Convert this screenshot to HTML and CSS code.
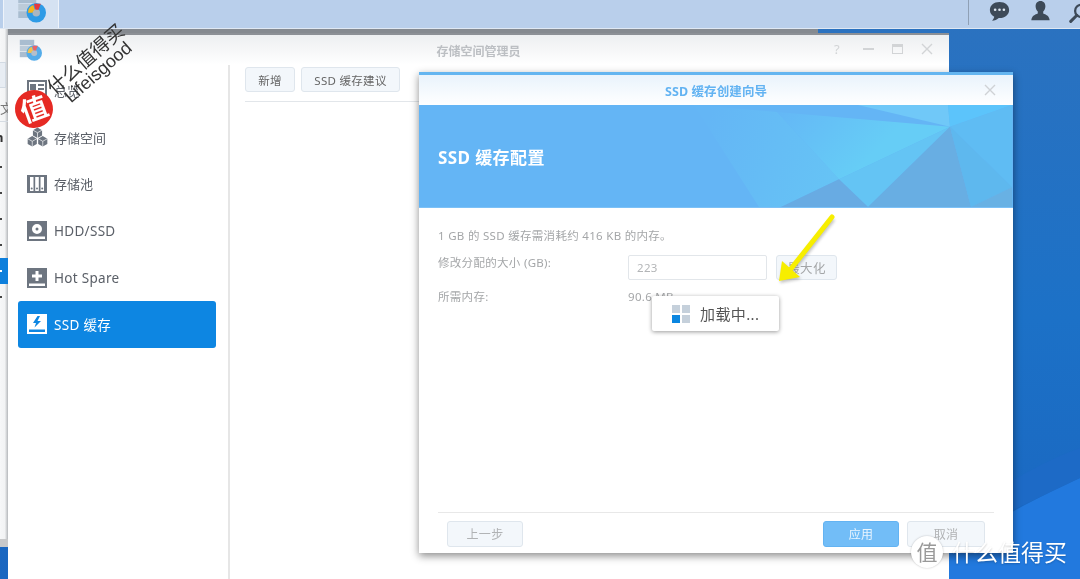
FILE: index.html
```html
<!DOCTYPE html>
<html lang="zh-CN">
<head>
<meta charset="utf-8">
<title>存储空间管理员</title>
<link rel="stylesheet" href="styles.css">
</head>
<body>
<div class="stage">
  <svg class="wallpaper" viewBox="0 0 1080 579" preserveAspectRatio="none">
    <defs>
      <linearGradient id="wall" x1="0" y1="0" x2="0" y2="1">
        <stop offset="0" stop-color="#2c72bf"/>
        <stop offset=".55" stop-color="#1c71c7"/>
        <stop offset="1" stop-color="#1a66c0"/>
      </linearGradient>
    </defs>
    <rect width="1080" height="579" fill="url(#wall)"/>
    <path d="M900 579 C960 540 1030 500 1080 478 V579 Z" fill="#2279de"/>
    <path d="M1013 480 C1040 465 1060 455 1080 448 V478 L1013 510 Z" fill="#1d6ac6"/>
  </svg>

  <header class="taskbar">
    <div class="task-tab">
      <svg class="app-icon" viewBox="0 0 40 40">
        <rect x="3" y="3" width="24" height="9" fill="#a9bdd0"/>
        <rect x="3" y="13" width="24" height="9" fill="#bccbd9"/>
        <rect x="3" y="23" width="24" height="9" fill="#a9bdd0"/>
        <circle cx="27" cy="25" r="9" fill="#aab6c2"/>
        <circle cx="27" cy="25" r="9" fill="none" stroke="#2e9be6" stroke-width="8"/>
        <path d="M16 25 A11 11 0 0 1 23 14.500 L25 21 A5 5 0 0 0 22 25 Z" fill="#f5b51c"/>
        <path d="M24 13 H33 L30 21 H26 Z" fill="#e8383d"/>
      </svg>
    </div>
    <div class="task-right">
      <svg class="tray-icon" viewBox="0 0 24 24"><path d="M12 1C5.600 1 1 5 1 10.200c0 3.400 2 6.200 5 7.800-.3 1.600-1.200 3.200-2.500 4.500 3 0 5.800-1.200 7.700-3h.8c6.400 0 11-4 11-9.300C23 5 18.400 1 12 1Z" fill="#3d4a58"/><circle cx="7" cy="10" r="1.500" fill="#dfe8f2"/><circle cx="12" cy="10" r="1.500" fill="#dfe8f2"/><circle cx="17" cy="10" r="1.500" fill="#dfe8f2"/></svg>
      <svg class="tray-icon" viewBox="0 0 24 24"><path d="M12 0c-3.600 0-5.600 2.600-5.600 6 0 2.500 1 4.700 2.500 6v2.200C6 15.500 2 16.500 1.500 22h21c-.5-5.500-4.500-6.500-7.400-7.800V12c1.500-1.300 2.500-3.500 2.500-6 0-3.400-2-6-5.600-6Z" fill="#3d4a58"/></svg>
      <svg class="tray-icon tray-search" viewBox="0 0 24 24"><circle cx="14" cy="9" r="7" fill="none" stroke="#3d4a58" stroke-width="2.600"/><path d="M9 14 2 21" stroke="#3d4a58" stroke-width="3.400" stroke-linecap="round"/></svg>
    </div>
  </header>

  <aside class="back-window">
    <div class="back-head"></div>
    <div class="back-btn"></div>
    <div class="back-label">文件</div>
    <div class="back-name">n</div>
    <ul class="back-list">
      <li class="back-row"></li>
      <li class="back-row"></li>
      <li class="back-row"></li>
      <li class="back-row"></li>
      <li class="back-row is-on"></li>
      <li class="back-row"></li>
    </ul>
    <div class="back-foot"></div>
  </aside>

  <div class="back-band"></div>

  <section class="main-window">
    <div class="win-title">
      <svg class="title-icon" viewBox="0 0 40 40">
        <rect x="3" y="3" width="24" height="9" fill="#a9bdd0"/>
        <rect x="3" y="13" width="24" height="9" fill="#bccbd9"/>
        <rect x="3" y="23" width="24" height="9" fill="#a9bdd0"/>
        <circle cx="27" cy="25" r="9" fill="#b4bfca"/>
        <circle cx="27" cy="25" r="9" fill="none" stroke="#54ace9" stroke-width="8"/>
        <path d="M16 25 A11 11 0 0 1 23 14.500 L25 21 A5 5 0 0 0 22 25 Z" fill="#f3c04e"/>
        <path d="M24 13 H33 L30 21 H26 Z" fill="#ea6468"/>
      </svg>
      <span class="win-name">存储空间管理员</span>
      <div class="win-controls">
        <span class="ctl-help">?</span>
        <i class="ctl-min"></i>
        <i class="ctl-max"></i>
        <svg class="ctl-close" viewBox="0 0 12 12"><path d="M1 1 11 11M11 1 1 11" stroke="#d2d4d6" stroke-width="1.400"/></svg>
      </div>
    </div>
    <div class="win-body">
      <nav class="sidebar">
        <a class="nav-item">
          <svg class="nav-icon" viewBox="0 0 20 20"><path fill="#6d7580" fill-rule="evenodd" d="M0 0h20v20H0Zm2 2v16h16V2Zm1 2h6v6H3Zm8 0h6v2h-6Zm0 4h6v2h-6ZM3 13h14v2H3Z"/></svg>
          <span class="nav-cn">总览</span>
        </a>
        <a class="nav-item">
          <svg class="nav-icon nav-icon-wide" viewBox="0 0 22 20">
            <path fill="#6d7580" d="M11 0l4.800 2.800v5.500L11 11 6.200 8.300V2.800ZM5.500 9l4.800 2.800v5.500L5.500 20 .7 17.300v-5.500ZM16.500 9l4.800 2.800v5.500L16.500 20l-4.800-2.700v-5.500Z"/>
            <path fill="none" stroke="#fff" stroke-width=".7" d="M6.200 2.800 11 5.500l4.800-2.700M11 5.500V11M.7 11.800l4.800 2.700 4.800-2.700M5.500 14.500V20M11.700 11.800l4.800 2.700 4.800-2.700M16.500 14.500V20"/>
          </svg>
          <span class="nav-cn">存储空间</span>
        </a>
        <a class="nav-item">
          <svg class="nav-icon" viewBox="0 0 20 20"><path fill="#6d7580" fill-rule="evenodd" d="M0 1h20v18H0Zm3 2v14h3.500V3Zm5.200 0v14h3.600V3Zm5.300 0v14H17V3Z"/><circle cx="4.700" cy="14.500" r="1" fill="#6d7580"/><circle cx="10" cy="14.500" r="1" fill="#6d7580"/><circle cx="15.200" cy="14.500" r="1" fill="#6d7580"/></svg>
          <span class="nav-cn">存储池</span>
        </a>
        <a class="nav-item">
          <svg class="nav-icon" viewBox="0 0 20 20"><path fill="#6d7580" fill-rule="evenodd" d="M0 0h20v20H0Zm10 3a5 5 0 1 0 0 10 5 5 0 0 0 0-10Zm0 3.500a1.500 1.500 0 1 1 0 3 1.500 1.500 0 0 1 0-3ZM2 15.500V18h16v-2.500Z"/></svg>
          <span>HDD/SSD</span>
        </a>
        <a class="nav-item">
          <svg class="nav-icon" viewBox="0 0 20 20"><path fill="#6d7580" fill-rule="evenodd" d="M0 0h20v20H0Zm8.500 3v3.500H5v3h3.500V13h3V9.500H15v-3h-3.500V3ZM2 15.500V18h16v-2.500Z"/></svg>
          <span>Hot Spare</span>
        </a>
        <a class="nav-item is-active">
          <svg class="nav-icon" viewBox="0 0 20 20"><path fill="#fff" fill-rule="evenodd" d="M0 0h20v20H0Zm10.500 2L6 9h3l-1.500 4.500L14 7h-3.500L13 2ZM2 15.500V18h16v-2.500Z"/></svg>
          <span>SSD 缓存</span>
        </a>
      </nav>
      <div class="content">
        <div class="toolbar">
          <button class="btn btn-add">新增</button>
          <button class="btn btn-advice">SSD 缓存建议</button>
        </div>
      </div>
    </div>
  </section>

  <section class="dialog">
    <div class="dlg-title">
      <span>SSD 缓存创建向导</span>
      <svg class="dlg-close" viewBox="0 0 12 12"><path d="M1 1 11 11M11 1 1 11" stroke="#cfd2d5" stroke-width="1.400"/></svg>
    </div>
    <div class="banner">
      <svg class="banner-art" viewBox="0 0 594 103" preserveAspectRatio="none">
        <defs>
          <linearGradient id="sheen" x1="358" y1="7" x2="430" y2="75" gradientUnits="userSpaceOnUse">
            <stop offset="0" stop-color="#64b7f6"/>
            <stop offset="1" stop-color="#66cdf6"/>
          </linearGradient>
          <linearGradient id="sheen2" x1="280" y1="40" x2="420" y2="90" gradientUnits="userSpaceOnUse">
            <stop offset="0" stop-color="#64b6f5"/>
            <stop offset="1" stop-color="#66c4f5"/>
          </linearGradient>
        </defs>
        <polygon points="275,0 340,103 362,103 420,75 358,7" fill="url(#sheen2)"/>
        <polygon points="358,7 531,22 420,75" fill="url(#sheen)"/>
        <polygon points="439,0 529,0 531,22" fill="#70c8f8"/>
        <polygon points="529,0 593,0 531,22" fill="#5cc4fb"/>
        <polygon points="531,22 593,0 593,83" fill="#5fbcf3"/>
        <polygon points="420,75 531,22 449,103" fill="#64c4f4"/>
        <polygon points="362,103 420,75 449,103" fill="#68abe3"/>
        <polygon points="449,103 531,22 552,103" fill="#68aee3"/>
        <polygon points="531,22 593,83 552,103" fill="#5eb8ee"/>
        <polygon points="552,103 593,83 593,103" fill="#68b1e4"/>
      </svg>
      <h1 class="banner-title">SSD 缓存配置</h1>
    </div>
    <div class="dlg-body">
      <p class="note">1 GB 的 SSD 缓存需消耗约 416 KB 的内存。</p>
      <div class="form-row">
        <label class="form-label">修改分配的大小 (GB):</label>
        <div class="field">223</div>
        <button class="btn btn-max">最大化</button>
      </div>
      <div class="form-row form-row-mem">
        <label class="form-label">所需内存:</label>
        <span class="form-value">90.6 MB</span>
      </div>
    </div>
    <div class="dlg-foot">
      <button class="btn btn-foot">上一步</button>
      <div class="foot-right">
        <button class="btn btn-foot btn-apply">应用</button>
        <button class="btn btn-foot btn-cancel">取消</button>
      </div>
    </div>
  </section>

  <div class="loader">
    <span class="loader-grid"><i></i><i></i><i class="is-blue"></i><i></i></span>
    <span class="loader-text">加载中...</span>
  </div>

  <svg class="arrow" viewBox="0 0 1080 579">
    <defs><filter id="soft" x="-30%" y="-30%" width="160%" height="160%"><feGaussianBlur stdDeviation="1.500"/></filter></defs>
    <g filter="url(#soft)" opacity=".35" transform="translate(1 2)">
      <path d="M832 217 790 270" stroke="#555" stroke-width="5"/>
      <polygon points="779,281 782,261 800,277" fill="#555"/>
    </g>
    <path d="M832 217 790 270" stroke="#f7ee00" stroke-width="5" stroke-linecap="round"/>
    <polygon points="779,281 782,261 800,277" fill="#f7ee00"/>
  </svg>

  <div class="mark-top">
    <span class="mark-cn">什么值得买</span>
    <span class="mark-en">Lifeisgood</span>
    <span class="mark-seal">值</span>
  </div>

  <div class="mark-bottom">
    <span class="mark-disc">值</span>
    <span class="mark-word">什么值得买</span>
  </div>
</div>
</body>
</html>
```
FILE: styles.css
```css
* { box-sizing: border-box; }
html, body { margin: 0; padding: 0; width: 1080px; height: 579px; overflow: hidden; }
body { font-family: "Noto Sans", "Noto Sans CJK SC", sans-serif; color: #555; }
button { font: inherit; }
ul { list-style: none; margin: 0; padding: 0; }

.stage { position: relative; width: 1080px; height: 579px; overflow: hidden; filter: blur(.35px); }
.wallpaper { position: absolute; inset: 0; width: 100%; height: 100%; }

/* top bar */
.taskbar {
  position: absolute; left: 0; top: 0; width: 1080px; height: 29px;
  display: flex; justify-content: space-between; padding-left: 3px;
  background: #b9cfeb; border-bottom: 1px solid #dfe8f3;
}
.task-tab {
  width: 56px; height: 28px; background: #d5e2f2;
  border-left: 1px solid #eef3fa; border-right: 1px solid #eef3fa;
  display: flex; justify-content: center; align-items: flex-end; overflow: hidden;
}
.app-icon { width: 30px; height: 30px; flex: none; margin-bottom: 4px; }
.task-right {
  display: flex; align-items: flex-start; gap: 20px; width: 112px; height: 25px;
  border-left: 1px solid #8fa0b5; padding: 1px 0 0 20px; overflow: hidden; flex: none;
}
.tray-icon { width: 21px; height: 21px; flex: none; }
.tray-search { margin: 2px 0 0 -2px; }

/* windows behind, only slivers visible */
.back-window {
  position: absolute; left: 0; top: 29px; width: 8px; height: 518px; overflow: hidden;
  background: linear-gradient(90deg, #f6f7f8 0, #f2f3f4 60%, #b5b8bb 100%);
}
.back-head { height: 33px; }
.back-btn { height: 26px; width: 6px; background: #e8edf3; border: 1px solid #d2dae3; border-left: 0; }
.back-label { height: 34px; padding-top: 10px; font-size: 13px; line-height: 20px; color: #777; border-bottom: 1px solid #d5dbe2; white-space: nowrap; }
.back-name { height: 32px; font-size: 13px; font-weight: 700; line-height: 30px; text-indent: -5px; color: #333; }
.back-list { display: flex; flex-direction: column; }
.back-row { height: 26px; position: relative; }
.back-row::after { content: ""; position: absolute; left: 0; top: 12px; width: 2px; height: 2px; background: #444; }
.back-row.is-on { background: #0d7fdc; }
.back-row.is-on::after { background: #fff; }
.back-foot { position: absolute; left: 0; bottom: 0; width: 8px; height: 8px; background: #c8c9ca; }
.back-band { position: absolute; left: 8px; top: 29px; width: 810px; height: 4px; background: #858a90; }

/* storage manager window */
.main-window {
  position: absolute; left: 8px; top: 33px; width: 941px; height: 546px;
  display: flex; flex-direction: column; background: #fff;
  border-top: 2px solid #8c9096;
}
.win-title {
  height: 30px; flex: none; display: flex; align-items: center; justify-content: center;
  position: relative; padding-top: 2px; background: linear-gradient(#edeff1, #fff);
}
.title-icon { position: absolute; left: 10px; top: 3px; width: 24px; height: 24px; }
.win-name { font-size: 12px; font-weight: 700; color: #bcbfc3; }
.win-controls { position: absolute; right: 16px; top: 6px; display: flex; align-items: center; gap: 18px; height: 16px; }
.ctl-help { width: 11px; font-size: 13px; line-height: 16px; color: #d2d4d6; }
.ctl-min { width: 11px; height: 2px; background: #d2d4d6; }
.ctl-max { width: 11px; height: 10px; border: 1px solid #d2d4d6; border-top-width: 3px; }
.ctl-close { width: 12px; height: 12px; }
.win-body { flex: 1; display: flex; min-height: 0; }
.sidebar {
  width: 222px; flex: none; padding: 2px 12px 0 10px;
  border-right: 2px solid #e6e6e6; display: flex; flex-direction: column;
}
.nav-item {
  height: 46.8px; display: flex; align-items: center; gap: 7px; padding-left: 9px;
  font-size: 13.500px; color: #5b6068; letter-spacing: .3px; border-radius: 3px;
}
.nav-cn { font-size: 13px; letter-spacing: 0; }
.nav-icon { width: 20px; height: 20px; flex: none; }
.nav-icon-wide { width: 21px; margin-right: -1px; }
.is-active { background: #0d86e2; color: #fff; }
.content { flex: 1; padding: 2px 15px 0; }
.toolbar { display: flex; gap: 6px; width: 300px; height: 35px; border-bottom: 1px solid #e2e6ea; align-items: flex-start; }

.btn {
  height: 25px; padding: 0; font-size: 11.500px; color: #666; flex: none;
  background: #f3f7fb; border: 1px solid #dfe6ed; border-radius: 3px;
  letter-spacing: .3px;
}
.btn-add { width: 50px; }
.btn-advice { width: 99px; }

/* wizard dialog */
.dialog {
  position: absolute; left: 419px; top: 72px; width: 594px; height: 481px;
  display: flex; flex-direction: column; background: #fff;
  border-top: 3px solid #64b5f0;
  box-shadow: 0 3px 8px rgba(0,0,0,.45);
}
.dlg-title {
  height: 30px; flex: none; position: relative; display: flex; align-items: center; justify-content: center;
  background: linear-gradient(#e9f3fc, #fff);
  font-size: 12.500px; font-weight: 700; color: #63b3f2; letter-spacing: .1px;
}
.dlg-close { position: absolute; right: 17px; top: 9px; width: 12px; height: 12px; }
.banner { height: 103px; flex: none; position: relative; background: #64b5f5; display: flex; align-items: center; padding-left: 19px; border-bottom: 1px solid #7cc1f7; }
.banner-art { position: absolute; inset: 0; width: 100%; height: 100%; }
.banner-title { position: relative; margin: 0; font-size: 17px; font-weight: 700; color: #fff; letter-spacing: .4px; }
.dlg-body { flex: 1; padding: 19px 19px 0; font-size: 11.500px; color: #a4a6a8; letter-spacing: .3px; }
.note { margin: 0; height: 28px; line-height: 18px; }
.form-row { display: flex; align-items: flex-start; }
.form-label { width: 190px; flex: none; line-height: 16px; }
.field { width: 139px; height: 25px; border: 1px solid #e2e6ea; border-radius: 2px; padding-left: 8px; line-height: 24px; font-size: 11.500px; color: #b3b5b7; }
.btn-max { width: 61px; margin-left: 9px; font-size: 12.500px; color: #a4a6a8; }
.form-row-mem { margin-top: 9px; line-height: 16px; }
.form-value { line-height: 16px; }
.dlg-foot {
  height: 41px; flex: none; margin: 0 19px; border-top: 1px solid #e8e8e8;
  padding: 8px 9px 0; display: flex; justify-content: space-between; align-items: flex-start;
}
.foot-right { display: flex; gap: 8px; }
.btn-foot { width: 76px; height: 26px; font-size: 12px; color: #b0b2b4; }
.btn-cancel { width: 78px; }
.btn-apply { background: #72bdf7; border-color: #63b3f2; color: #eaf5fe; }

/* loading tip */
.loader {
  position: absolute; left: 652px; top: 296px; width: 127px; height: 35px;
  display: flex; align-items: center; gap: 10px; padding-left: 20px;
  background: #fff; border-radius: 2px; box-shadow: 0 1px 4px rgba(0,0,0,.4);
  font-size: 15px; color: #555;
}
.loader-text { letter-spacing: .4px; }
.loader-grid { width: 18px; height: 18px; display: grid; grid-template-columns: 8px 8px; gap: 2px; }
.loader-grid i { background: #c5d0db; }
.loader-grid .is-blue { background: #0a86e0; }

.arrow { position: absolute; inset: 0; width: 1080px; height: 579px; pointer-events: none; }

/* watermarks */
.mark-top { position: absolute; inset: 0; pointer-events: none; }
.mark-cn { position: absolute; left: 38px; top: 45px; font-size: 19px; line-height: 28px; color: #333; transform: rotate(-41deg); white-space: nowrap; }
.mark-en { position: absolute; left: 57px; top: 60px; font: 18px/24px "Liberation Sans", sans-serif; color: #333; transform: rotate(-41deg); white-space: nowrap; }
.mark-seal {
  position: absolute; left: 15px; top: 90px; width: 38px; height: 38px; border-radius: 50%;
  background: #e62a24; color: #fff; font-size: 27px; line-height: 38px; text-align: center; font-weight: 700;
  transform: rotate(-20deg);
}
.mark-bottom { position: absolute; left: 911px; top: 536px; display: flex; align-items: center; gap: 9px; pointer-events: none; }
.mark-disc {
  width: 32px; height: 32px; border-radius: 50%; background: #fff; color: #999;
  font-size: 21px; line-height: 32px; text-align: center; box-shadow: 0 0 2px rgba(0,0,0,.25);
}
.mark-word { font-size: 23px; line-height: 32px; color: #fff; white-space: nowrap; text-shadow: 0 1px 2px rgba(0,0,0,.2); }
```
